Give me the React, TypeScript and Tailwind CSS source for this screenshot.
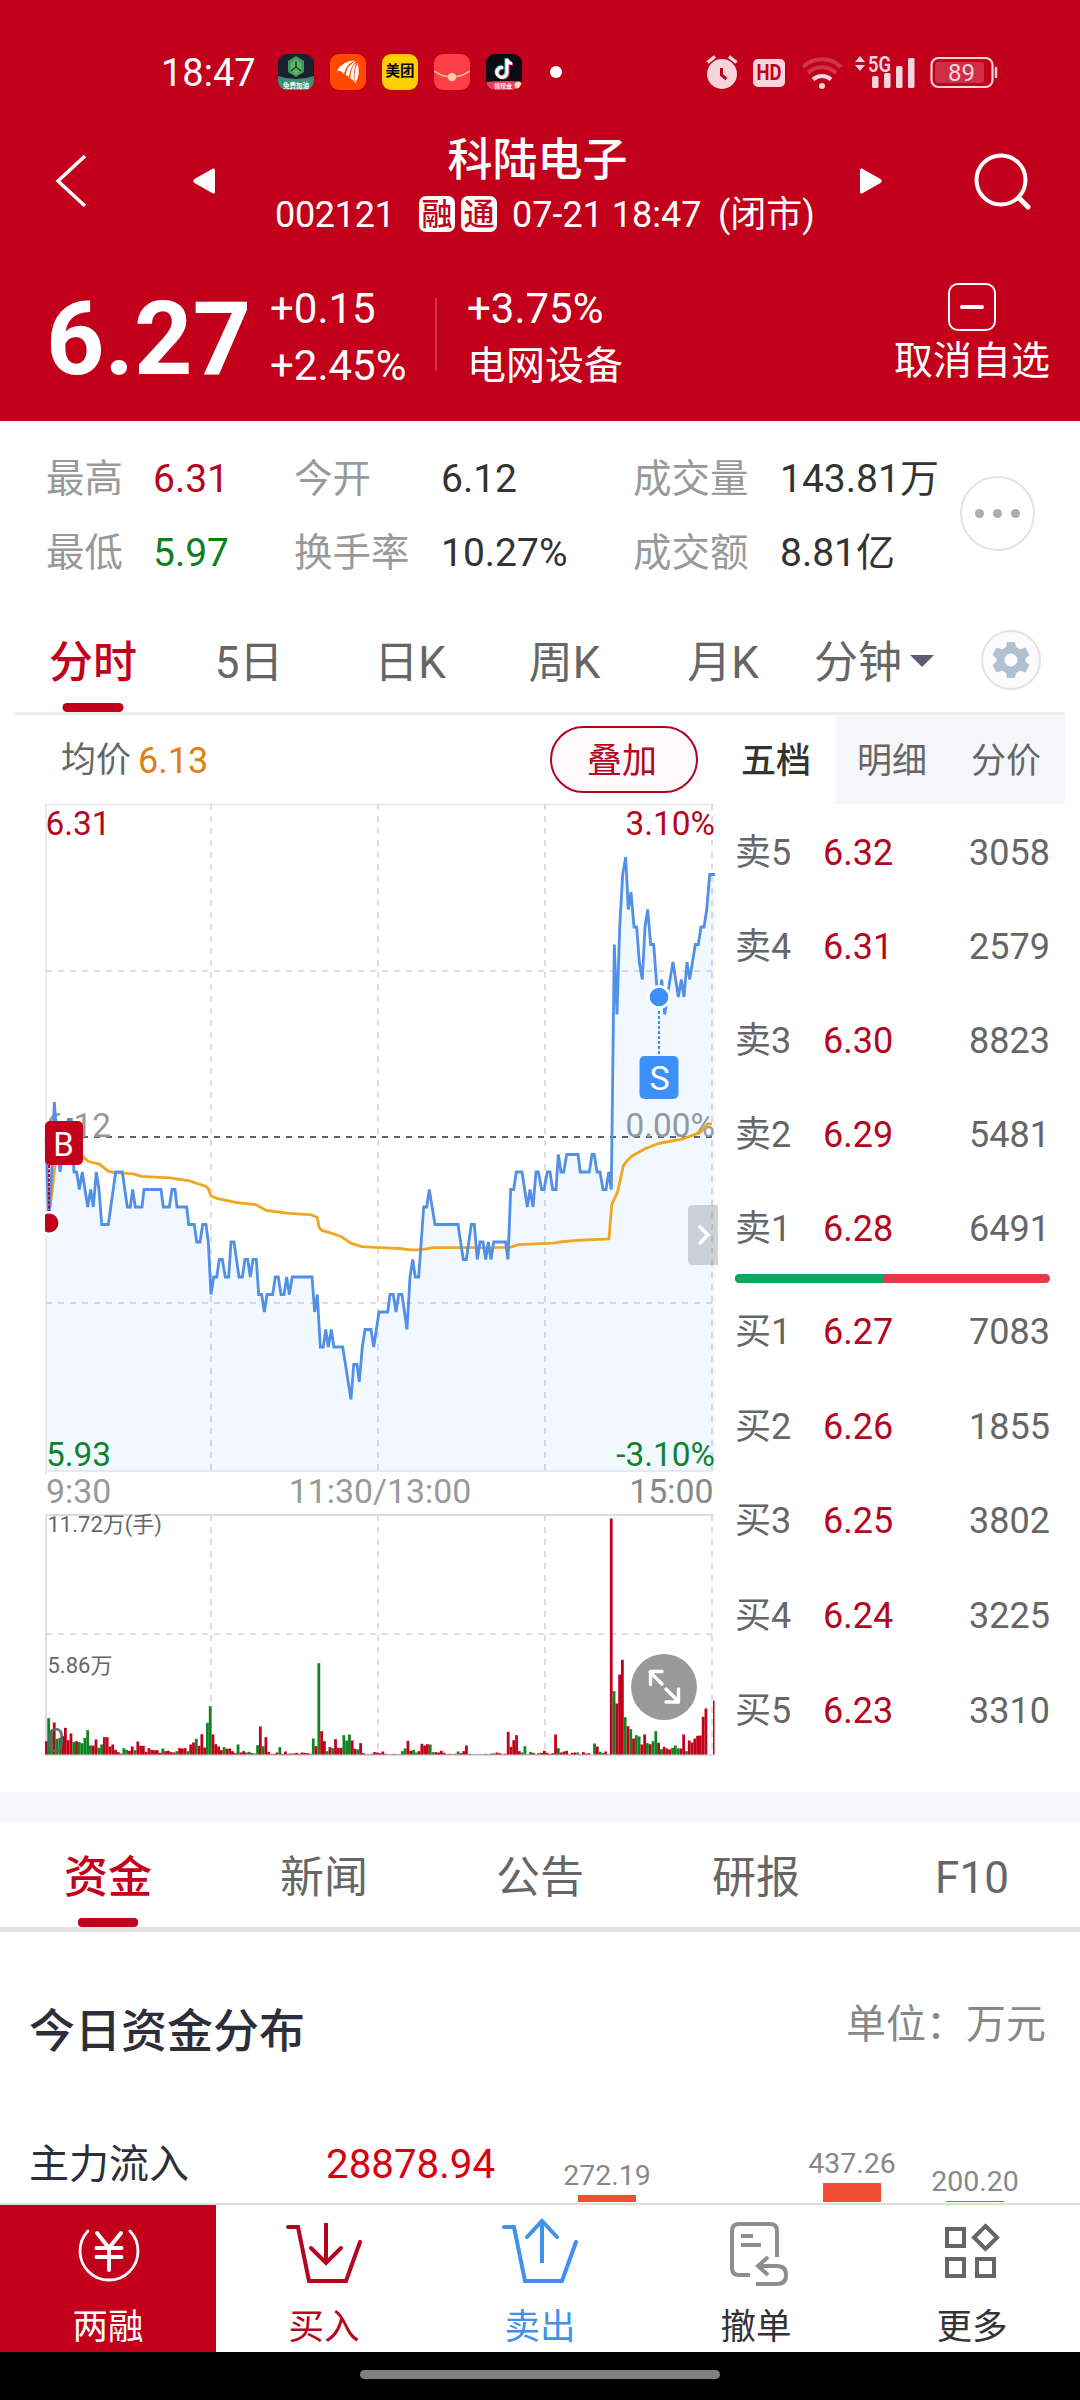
import { useState } from "react";
import clsx from "clsx";

const FONT = "font-['Roboto','Noto_Sans_CJK_SC',sans-serif]";

// Price line: [x in thirds of a pixel, distance from the previous close in cents]
const PRICE: [number, number][] = [
  [48, 0], [56, -5], [65, -2], [73, 2], [81, 0], [90, -2], [98, -1], [107, 0], [115, 1], [124, 1],
  [132, -2], [140, -2], [148, -3], [157, -2], [165, -3], [173, -4], [182, -3], [190, -4], [199, -2],
  [207, -3], [215, -5], [235, -5], [257, -2], [277, -2], [292, -4], [301, -4], [308, -3], [316, -4],
  [336, -4], [342, -3], [393, -3], [400, -4], [418, -4], [426, -3], [435, -3], [441, -4], [470, -4],
  [476, -5], [493, -5], [500, -6], [510, -6], [518, -5], [528, -5], [535, -6], [543, -9], [551, -8],
  [560, -8], [568, -7], [577, -7], [586, -8], [596, -8], [603, -6], [612, -6], [627, -8], [637, -8],
  [645, -7], [653, -7], [661, -8], [669, -7], [679, -7], [686, -9], [695, -9], [703, -10], [711, -9],
  [728, -9], [736, -8], [745, -8], [753, -9], [762, -9], [770, -8], [778, -9], [787, -8], [846, -8],
  [854, -10], [862, -9], [871, -12], [880, -12], [887, -11], [895, -12], [904, -11], [912, -12],
  [938, -12], [963, -15], [971, -13], [981, -13], [988, -14], [997, -12], [1005, -11], [1023, -11],
  [1031, -12], [1047, -10], [1073, -10], [1080, -9], [1090, -9], [1098, -10], [1106, -9], [1116, -9],
  [1131, -11], [1140, -8], [1148, -7], [1156, -8], [1166, -8], [1181, -4], [1190, -4], [1198, -3],
  [1215, -5], [1284, -5], [1300, -7], [1309, -7], [1324, -5], [1333, -5], [1342, -7], [1350, -6],
  [1359, -6], [1367, -7], [1375, -6], [1383, -7], [1391, -6], [1427, -6], [1434, -7], [1442, -3],
  [1451, -3], [1459, -2], [1476, -2], [1492, -4], [1500, -3], [1509, -4], [1518, -2], [1525, -2],
  [1535, -3], [1542, -3], [1552, -2], [1560, -2], [1568, -3], [1578, -3], [1585, -1], [1593, -2],
  [1601, -2], [1610, -1], [1644, -1], [1651, -2], [1678, -2], [1686, -1], [1693, -1], [1701, -2],
  [1710, -2], [1719, -3], [1728, -3], [1736, -2], [1744, -3], [1753, 11], [1761, 7], [1769, 12],
  [1778, 15], [1787, 16], [1795, 13], [1803, 14], [1812, 12], [1820, 12], [1828, 10], [1837, 9],
  [1845, 12], [1853, 13], [1862, 11], [1871, 11], [1880, 8.7], [1887, 8], [1895, 9], [1904, 7],
  [1912, 8], [1920, 9], [1929, 10], [1945, 8], [1954, 9], [1962, 8], [1971, 10], [1979, 9],
  [1996, 11], [2005, 11], [2013, 12], [2022, 12], [2030, 13], [2039, 15], [2055, 15],
];

const AVERAGE: [number, number][] = [
  [52, -4.6], [60, -4], [68, -2.8], [75, -1.6], [90, -0.8], [140, -0.7], [159, -1.1], [175, -1.4],
  [208, -1.55], [235, -1.95], [250, -2.02], [310, -2.1], [335, -2.25], [420, -2.33], [478, -2.5],
  [500, -2.65], [525, -2.8], [533, -2.9], [543, -3.37], [560, -3.5], [610, -3.7], [630, -3.77],
  [678, -3.87], [710, -4.2], [770, -4.35], [845, -4.45], [862, -4.6], [867, -5.15], [875, -5.33],
  [905, -5.5], [935, -5.7], [962, -6.07], [995, -6.27], [1080, -6.35], [1110, -6.37], [1140, -6.45],
  [1170, -6.45], [1210, -6.32], [1440, -6.3], [1465, -6.15], [1570, -6.07], [1590, -6],
  [1640, -5.9], [1737, -5.82], [1745, -3.87], [1763, -3.12], [1780, -1.64], [1790, -1.39],
  [1805, -1.1], [1845, -0.67], [1885, -0.37], [1960, -0.1], [2010, 0.25], [2033, 0.75], [2046, 0.75],
];

// One entry per minute: height in thirds of a pixel, r = up, g = down
const VOLUME = (
  "40r 109g 72g 96r 47g 50g 55r 80r 43r 63r 38g 40r 37g 34g 50g 73g 27g 27r 45r 20g " +
  "30g 52r 52r 24r 30r 14r 7r 3r 19g 14g 11r 24r 13g 39r 26r 26r 8r 19r 14r 13r " +
  "13r 5r 18g 10r 11r 7r 6r 10g 19r 18r 19r 10g 30r 36r 47g 26r 61r 21r 95g 145g " +
  "60r 31r 24r 13r 22g 17r 18r 10r 4r 30g 6r 10r 6g 8g 4r 3g 28g 84r 25g 52r " +
  "8r 2r 2r 6r 22g 2r 9r 2r 3r 3r 5r 2r 6r 5r 4r 2r 48g 25r 274g 70r " +
  "40r 10g 22r 19g 46r 20r 20r 58g 42g 60g 42r 17r 15g 34r 4r 1r 1g 2r 7r 6r " +
  "4r 9r 2r 1g 1r 2g 1r 1r 10g 18g 41r 11r 14g 6g 10r 32r 27r 31r 30g 7g " +
  "7r 6r 11r 5r 1g 2r 1r 2r 9g 4r 10r 27r 2r 1g 1g 1r 1r 1g 2r 1r " +
  "3g 3r 6r 4r 1r 2r 68r 23r 43r 58r 10r 6g 25g 1g 8g 5r 1r 4g 5r 11r " +
  "5r 2r 4r 60r 19g 6r 9r 11r 1r 5r 6r 6g 1r 7r 3r 4r 0r 33g 24r 8g " +
  "5g 9r 1r 708r 190g 153r 240r 284r 112g 85r 76g 48r 58g 54g 30r 60r 34g 31r 40g 70g " +
  "35r 16g 23r 18r 15r 20g 27g 18g 18r 60r 10g 42r 36r 48r 56r 57r 113r 138r 0r 0r 162r"
).split(" ");

const toX = (x: number) => x / 3 - 15;
const toY = (cents: number) => 337 - cents * 17.5;
const toPoints = (list: [number, number][]) =>
  list.map(([x, c]) => `${toX(x).toFixed(1)},${toY(c).toFixed(1)}`).join(" ");

const STATS = [
  [
    { label: "最高", value: "6.31", color: "text-[#b3061f]" },
    { label: "最低", value: "5.97", color: "text-[#0f7f1e]" },
  ],
  [
    { label: "今开", value: "6.12", color: "text-[#333333]" },
    { label: "换手率", value: "10.27%", color: "text-[#333333]" },
  ],
  [
    { label: "成交量", value: "143.81万", color: "text-[#333333]" },
    { label: "成交额", value: "8.81亿", color: "text-[#333333]" },
  ],
];

const SELL = [
  ["卖5", "6.32", "3058"],
  ["卖4", "6.31", "2579"],
  ["卖3", "6.30", "8823"],
  ["卖2", "6.29", "5481"],
  ["卖1", "6.28", "6491"],
];

const BUY = [
  ["买1", "6.27", "7083"],
  ["买2", "6.26", "1855"],
  ["买3", "6.25", "3802"],
  ["买4", "6.24", "3225"],
  ["买5", "6.23", "3310"],
];

function StatusBar() {
  return (
    <div className="flex h-[144px] items-center pl-[161px] pr-[82px]">
      <span className="w-[117px] pt-0.5 text-[38px] leading-none">18:47</span>
      <div className="flex gap-4">
        <svg className="h-9 w-9" viewBox="0 0 36 36">
          <defs>
            <clipPath id="tile">
              <rect width="36" height="36" rx="9" />
            </clipPath>
          </defs>
          <g clipPath="url(#tile)">
            <rect width="36" height="36" fill="#1b1f30" />
            <path d="M18 2 26 7v11l-8 5-8-5V7z" fill="#3f9a63" />
            <path d="M18 5 23 9v8l-5 4-5-4V9z" fill="#62b862" />
            <path d="M18 7v6l-5 4M18 13l5 4" stroke="#123c30" strokeWidth="1.5" fill="none" />
            <path d="M0 22q18 6 36 0v14H0z" fill="#3f8f6f" />
            <text x="18" y="33.5" textAnchor="middle" fontSize="6.5" fontWeight="700" fill="#fff">免费加油</text>
          </g>
        </svg>
        <svg className="h-9 w-9" viewBox="0 0 36 36">
          <rect width="36" height="36" rx="9" fill="#ff4a00" />
          <g fill="#fff">
            <path d="M7 17Q12 7 25 6.500 16 10 14 20q-3-4-7-3z" />
            <path d="M15.5 21Q17 11 26 7q-6 7-7 16-1.500-2-3.500-2z" />
            <path d="M20.500 25Q20 14 26.500 8.500 23 17 24 28q-1-3-3.500-3z" />
            <path d="M25 30q-2-11 2.500-21 3.500 11-2.500 21z" />
          </g>
        </svg>
        <div className="flex h-9 w-9 items-center justify-center rounded-[9px] bg-[#ffd000] text-[14.5px] font-bold leading-none text-black">
          美团
        </div>
        <svg className="h-9 w-9" viewBox="0 0 36 36">
          <rect width="36" height="36" rx="9" fill="#fb3f46" />
          <path d="M0 17q18 12 36 0" stroke="#ffb49a" strokeWidth="1.6" fill="none" />
          <circle cx="18" cy="23" r="4.2" fill="#f7cfa0" />
        </svg>
        <svg className="h-9 w-9" viewBox="0 0 36 36">
          <g clipPath="url(#tile)" fill="none" strokeWidth="3">
            <rect width="36" height="36" fill="#0b0b16" />
            <path d="M17 13.5a5 5 0 1 0 4 5V5q1 4 5 4.5" stroke="#25e5e0" transform="translate(-1 -.7)" />
            <path d="M17 13.5a5 5 0 1 0 4 5V5q1 4 5 4.5" stroke="#f8365b" transform="translate(1 .7)" />
            <path d="M17 13.5a5 5 0 1 0 4 5V5q1 4 5 4.5" stroke="#fff" />
            <path d="M0 28q18-2 36 0v9H0z" fill="#ee3f5c" />
            <circle cx="32" cy="31" r="3.5" fill="#ffd9b0" />
            <text x="17" y="34" textAnchor="middle" fontSize="6" fontWeight="700" fill="#ffe6e6">领现金</text>
          </g>
        </svg>
      </div>
      <span className="ml-7 h-3 w-3 rounded-full bg-white" />

      <div className="ml-auto flex items-center text-[#f8d5dc]">
        <svg className="h-9 w-8" viewBox="0 0 32 36" fill="none">
          <circle cx="16" cy="20" r="15" fill="currentColor" />
          <path d="M1.5 8.5 9 2.5M30.5 8.5 23 2.5" stroke="currentColor" strokeWidth="3.5" />
          <path d="M15.5 14v7l5 4" stroke="#c3001b" strokeWidth="3" />
        </svg>
        <div className="ml-[15px] mt-0.5 flex h-7 w-8 items-center justify-center rounded-[5px] bg-[#f8d5dc] text-[22px] font-bold leading-none text-[#c3001b]">
          <span className="scale-x-[0.84]">HD</span>
        </div>
        <svg className="ml-4 h-9 w-[42px]" viewBox="0 0 42 36" fill="none" stroke="currentColor" strokeWidth="4">
          <path d="M2 13a27 27 0 0 1 38 0" opacity=".25" />
          <path d="M7 19a20 20 0 0 1 28 0" opacity=".25" />
          <path d="M12 25.5a13 13 0 0 1 18 0" />
          <circle cx="21" cy="32" r="3" fill="currentColor" stroke="none" />
        </svg>
        <svg className="ml-3 h-9 w-[61px] overflow-visible" viewBox="0 0 61 36" fill="currentColor">
          <path d="M5 2 10 8H0zM5 17 0 11h10z" />
          <text x="13" y="17.5" fontSize="22" fontWeight="600" textLength="23" lengthAdjust="spacingAndGlyphs">5G</text>
          <rect x="17" y="22" width="6.5" height="12" rx="1.5" />
          <rect x="29" y="19" width="6.5" height="15" rx="1.5" />
          <rect x="41" y="12" width="6.5" height="22" rx="1.5" />
          <rect x="53" y="4" width="6.5" height="30" rx="1.5" />
        </svg>
        <svg className="ml-[14px] h-9 w-[68px]" viewBox="0 0 68 36" fill="none">
          <rect x="1.5" y="4" width="61" height="29" rx="7" stroke="currentColor" strokeWidth="2.2" />
          <rect x="5" y="8" width="49" height="21" rx="3" fill="currentColor" opacity=".22" />
          <path d="M66 14v9" stroke="currentColor" strokeWidth="2.5" strokeLinecap="round" />
          <text x="31.5" y="27" textAnchor="middle" fontSize="24" fill="currentColor">89</text>
        </svg>
      </div>
    </div>
  );
}

function Header() {
  return (
    <header className="h-[421px] bg-[#c3001b] text-white">
      <StatusBar />

      <div className="flex h-[104px] pt-2">
        <svg className="ml-[54px] mt-0.5 h-[54px] w-[34px]" viewBox="0 0 34 54" fill="none" stroke="currentColor" strokeWidth="3.5">
          <path d="M31 2 4 27 31 52" />
        </svg>
        <svg className="ml-[105px] mt-4 h-[26px] w-[22px]" viewBox="0 0 22 26" fill="currentColor">
          <path d="M20 .5Q22 0 22 2v22q0 2-2 1.5L1.5 15Q-1 13 1.5 11z" />
        </svg>
        <div className="flex w-[645px] flex-col">
          <h1 className="-mt-3.5 h-[46px] text-center text-[45px] font-medium leading-[46px]">科陆电子</h1>
          <div className="mt-3 flex h-9 items-center whitespace-nowrap pl-[60px] text-[36px] leading-9">
            <span className="w-[144px] pt-px tracking-[-0.3px]">002121</span>
            <span className="mr-1.5 flex h-9 w-9 items-center justify-center rounded-[7px] bg-white text-[31px] font-medium leading-none text-[#c3001b]">融</span>
            <span className="mr-[15px] flex h-9 w-9 items-center justify-center rounded-[7px] bg-white text-[31px] font-medium leading-none text-[#c3001b]">通</span>
            <span className="w-[206px] pt-px">07-21 18:47</span>
            <span className="pt-px">(闭市)</span>
          </div>
        </div>
        <svg className="mt-4 h-[26px] w-[22px]" viewBox="0 0 22 26" fill="currentColor">
          <path d="M2 .5Q0 0 0 2v22q0 2 2 1.5L20.5 15Q23 13 20.5 11z" />
        </svg>
        <svg className="ml-[91px] h-[60px] w-[60px]" viewBox="0 0 60 60" fill="none" stroke="currentColor" strokeWidth="4">
          <circle cx="28" cy="28" r="24.5" />
          <path d="m46 46 9 9" strokeWidth="5" strokeLinecap="round" />
        </svg>
      </div>

      <div className="flex h-[173px] pl-[46px]">
        <div className="w-[224px] pt-10 text-[102px] font-bold leading-[103px]">6.27</div>
        <div className="w-[165px] pt-8 text-[42px] leading-[57px]">
          <div>+0.15</div>
          <div>+2.45%</div>
        </div>
        <div className="mt-[50px] h-[73px] w-0.5 bg-white/20" />
        <div className="ml-[30px] pt-8 text-[42px] leading-[57px]">
          <div>+3.75%</div>
          <div className="pt-px text-[39px]">电网设备</div>
        </div>
        <div className="ml-auto flex flex-col items-center pr-[30px] pt-[35px]">
          <div className="flex h-12 w-12 items-center justify-center rounded-[10px] border-[2.5px] border-white">
            <div className="h-1 w-6 rounded-full bg-white" />
          </div>
          <div className="mt-2.5 text-[39px] leading-[40px]">取消自选</div>
        </div>
      </div>
    </header>
  );
}

function Stats() {
  const columns = ["w-[248px]", "w-[339px]", "w-[327px]"];
  const labels = ["w-[107px]", "w-[147px]", "w-[147px]"];
  return (
    <section className="flex h-[179px] items-start pl-[46px] pt-[21px]">
      {STATS.map((column, i) => (
        <div key={i} className={clsx("text-[39px] leading-[74px]", columns[i])}>
          {column.map((item) => (
            <div key={item.label} className="flex whitespace-nowrap">
              <span className={clsx("text-[38.5px] text-[#999999]", labels[i])}>{item.label}</span>
              <span className={item.color}>{item.value}</span>
            </div>
          ))}
        </div>
      ))}
      <div className="mt-[34px] flex h-[75px] w-[75px] items-center justify-center gap-[9px] rounded-full border-2 border-[#e3e3e3]">
        <span className="h-[9px] w-[9px] rounded-full bg-[#a9adb5]" />
        <span className="h-[9px] w-[9px] rounded-full bg-[#a9adb5]" />
        <span className="h-[9px] w-[9px] rounded-full bg-[#a9adb5]" />
      </div>
    </section>
  );
}

function PeriodTabs() {
  const [active, setActive] = useState("分时");
  const tabs = [
    ["分时", "w-[156px]"],
    ["5日", "w-[156px]"],
    ["日K", "w-[166px]"],
    ["周K", "w-[143px]"],
    ["月K", "w-[174px]"],
  ];
  return (
    <nav className="mx-[15px] flex h-[115px] items-center border-b-[3px] border-[#ececee] text-[44px] leading-[60px] text-[#666666]">
      {tabs.map(([name, width]) => (
        <button
          key={name}
          onClick={() => setActive(name)}
          className={clsx(
            "relative h-full pt-3.5",
            width,
            active === name && "font-medium text-[#c3001b]",
          )}
        >
          {name}
          {active === name && (
            <span className="absolute bottom-0 left-1/2 h-[9px] w-[61px] -translate-x-1/2 rounded-full bg-[#c3001b]" />
          )}
        </button>
      ))}
      <button className="ml-1 flex items-center pt-3.5">
        分钟
        <svg className="ml-2 h-3 w-6 -translate-y-0.5" viewBox="0 0 24 12" fill="#5b5b72">
          <path d="M0 0h24L12 12z" />
        </svg>
      </button>
      <div className="ml-auto mr-6 mt-2 flex h-[60px] w-[60px] items-center justify-center rounded-full border-2 border-[#e3e3e3] bg-[#fbfbfb]">
        <svg className="h-[38px] w-[38px]" viewBox="0 0 38 38" fill="#b1bfd0">
          <path
            fillRule="evenodd"
            d="M15 1h8l1 5 4 2.5 5.5-2L37.5 14l-4 3.5v3l4 3.5-4 7.5-5.5-2L24 32l-1 5h-8l-1-5-4-2.500-5.500 2L.5 24l4-3.500v-3L.5 14l4-7.500 5.500 2L14 6zM19 12.500a6.500 6.500 0 1 0 0 13 6.500 6.500 0 0 0 0-13z"
          />
        </svg>
      </div>
    </nav>
  );
}

function Chart() {
  const price = toPoints(PRICE);
  return (
    <svg className="block h-[990px] w-[720px]" viewBox="-45 0 720 990">
      {/* price grid */}
      <g fill="none" stroke="#dddddf" strokeWidth="2">
        <path d="M1 675V4.5H669" stroke="#ebebed" />
        <path d="M1 171H667M1 503H667" strokeDasharray="6 6" />
        <path d="M166 4V670M333 4V670M500 4V670M667 4V670" strokeDasharray="6 6" />
        <path d="M0 671H669" stroke="#e6eaef" />
      </g>
      <path d="M1 337H667" stroke="#606060" strokeWidth="2" strokeDasharray="6 6" />

      <g fontSize="33.4">
        <text x="0.5" y="35" fill="#b3061f">6.31</text>
        <text x="670" y="35" fill="#b3061f" textAnchor="end">3.10%</text>
        <text x="1" y="337" fill="#999999">6.12</text>
        <text x="670" y="337" fill="#999999" textAnchor="end">0.00%</text>
        <text x="1" y="666" fill="#0f7f1e">5.93</text>
        <text x="670" y="666" fill="#0f7f1e" textAnchor="end">-3.10%</text>
      </g>

      <polygon points={`1,670 ${price} 670,670`} fill="#379bff" opacity=".07" />
      <polyline points={toPoints(AVERAGE)} fill="none" stroke="#f2a51e" strokeWidth="2.8" strokeLinejoin="round" />
      <polyline points={price} fill="none" stroke="#528fe6" strokeWidth="2.8" />

      {/* trade marks */}
      <path d="M4 365V413" stroke="#c3001b" strokeWidth="2" strokeDasharray="3 1.5" />
      <path d="M0 411.700A12 12 0 1 1 0 434.300z" fill="#fff" />
      <path d="M0 414.500A9.400 9.400 0 1 1 0 431.500z" fill="#c3001b" />
      <rect x="0" y="321" width="38" height="44" rx="5" fill="#c3001b" />
      <text x="18.5" y="355.5" fontSize="33" fill="#fff" textAnchor="middle">B</text>

      <path d="M614 206V257" stroke="#3f8ef5" strokeWidth="2" strokeDasharray="3 2" />
      <circle cx="614" cy="197" r="12" fill="#fff" />
      <circle cx="614" cy="197" r="9.3" fill="#3d90f8" />
      <rect x="594.5" y="256" width="39" height="43" rx="5" fill="#3d90f8" />
      <text x="614.5" y="290" fontSize="34" fill="#fff" textAnchor="middle">S</text>

      <path d="M673 405H648q-5 0-5 5v50q0 5 5 5h25z" fill="#8c8c98" opacity=".38" />
      <path d="m655 427 8 8-8 8" fill="none" stroke="#fff" strokeWidth="3.6" strokeLinecap="round" />

      <g fontSize="33.8" fill="#999999">
        <text x="1" y="703">9:30</text>
        <text x="335" y="703" textAnchor="middle">11:30/13:00</text>
        <text x="668.5" y="703" textAnchor="end" fill="#888888">15:00</text>
      </g>

      {/* volume */}
      <g fill="none" stroke="#dddddd" strokeWidth="2">
        <path d="M1 955V715H669" />
        <path d="M1 834H667" strokeDasharray="6 6" />
        <path d="M166 715V955M333 715V955M500 715V955M667 715V955" strokeDasharray="6 6" />
        <path d="M0 955H669" />
      </g>
      {VOLUME.map((item, i) => {
        const height = parseInt(item) / 3;
        const x = i === 240 ? 668 : Math.max(i * 2.785 - 0.5, 0);
        return (
          <rect
            key={i}
            x={x}
            y={954.5 - height}
            width={i === 240 ? 1.5 : 2.785}
            height={height}
            fill={item.endsWith("r") ? "#c3001b" : "#0f8420"}
          />
        );
      })}
      <g fill="#666666">
        <text x="2.5" y="732" fontSize="22">11.72万(手)</text>
        <text x="2.5" y="873" fontSize="22">5.86万</text>
        <text x="1.5" y="952" fontSize="33" opacity=".9">0</text>
      </g>
      <circle cx="619" cy="887" r="33" fill="#999999" />
      <path
        d="M617 884 605 872M617 871.5h-11.5v13M621 889l12 12M621 902h12.5v-13"
        fill="none"
        stroke="#fff"
        strokeWidth="3.4"
        strokeLinecap="round"
        strokeLinejoin="round"
      />
    </svg>
  );
}

function BookRow({ row, height }: { row: string[]; height: string }) {
  const [name, price, amount] = row;
  return (
    <div className={clsx("flex items-center pt-1 text-[36px] leading-none text-[#666666]", height)}>
      <span className="w-[88px]">{name}</span>
      <span className="text-[#b3061f]">{price}</span>
      <span className="ml-auto">{amount}</span>
    </div>
  );
}

function OrderBook() {
  return (
    <aside className="w-[345px]">
      <div className="flex h-[89px] text-[35px] leading-[93px] text-[#666666]">
        <span className="w-[115px] pl-[21px] font-medium text-[#333333]">五档</span>
        <div className="flex flex-1 justify-between bg-[#f5f5fa] pl-[22px] pr-6">
          <span>明细</span>
          <span>分价</span>
        </div>
      </div>
      <div className="px-[15px]">
        {SELL.map((row) => (
          <BookRow key={row[0]} row={row} height="h-[94px]" />
        ))}
        <div className="flex h-[9px] overflow-hidden rounded-full bg-[#e8384a]">
          <div className="w-[149px] bg-[#06ab61]" />
        </div>
        {BUY.map((row) => (
          <BookRow key={row[0]} row={row} height="h-[94.6px]" />
        ))}
      </div>
    </aside>
  );
}

function InfoTabs() {
  const [active, setActive] = useState("资金");
  return (
    <nav className="flex h-[110px] border-b-[5px] border-[#e2e2e2] text-[44px] leading-[106px] text-[#666666]">
      {["资金", "新闻", "公告", "研报", "F10"].map((name) => (
        <button
          key={name}
          onClick={() => setActive(name)}
          className={clsx("relative flex-1 pt-[3px]", active === name && "font-medium text-[#c3001b]")}
        >
          {name}
          {active === name && (
            <span className="absolute bottom-0 left-1/2 h-[9px] w-[60px] -translate-x-1/2 rounded-[4px] bg-[#c3001b]" />
          )}
        </button>
      ))}
    </nav>
  );
}

function FundBars() {
  return (
    <div className="flex h-[77px] flex-1 items-end text-[28.5px] leading-none text-[#888888]">
      <div className="ml-[62px] flex w-[90px] flex-col items-center gap-[5px]">
        272.19
        <div className="h-[7px] w-[58px] bg-[#f04d34]" />
      </div>
      <div className="ml-[155px] flex w-[90px] flex-col items-center gap-[5px]">
        437.26
        <div className="h-[19px] w-[58px] bg-[#f04d34]" />
      </div>
      <div className="ml-[33px] flex w-[90px] flex-col items-center gap-[5px]">
        200.20
        <div className="h-px w-[58px] bg-[#f04d34]" />
      </div>
    </div>
  );
}

function Funds() {
  return (
    <section className="h-[271px] overflow-hidden">
      <div className="flex items-center justify-between pl-[29px] pr-[34px] pt-[66px] text-[46px] leading-[66px] text-[#2e2e3a]">
        <h2 className="font-medium">今日资金分布</h2>
        <span className="-mt-3 text-[40px] text-[#888888]">单位：万元</span>
      </div>
      <div className="mt-[61px] flex h-[80px] pl-[29px]">
        <span className="w-[297px] text-[40px] leading-[80px] text-[#2e2e3a]">主力流入</span>
        <span className="w-[174px] text-[40.3px] leading-[80px] text-[#d9000f]">28878.94</span>
        <FundBars />
      </div>
    </section>
  );
}

function BottomBar() {
  const label = "mt-3.5 text-[35.5px] leading-[40px]";
  return (
    <footer>
      <div className="grid h-[149px] grid-cols-5 border-t-2 border-[#dddddd] text-[#333333]">
        <button className="flex flex-col items-center bg-[#c3001b] pt-3 text-white">
          <svg className="h-[76px] w-[80px]" viewBox="0 0 80 76" fill="none" stroke="currentColor" strokeLinecap="round">
            <path d="M62 14a29 29 0 1 1-42 0" strokeWidth="2.8" />
            <path d="m29 16 12 15 12-15M41 31v22M28.5 31h25M28.5 40h25" strokeWidth="4" />
          </svg>
          <span className={label}>两融</span>
        </button>
        <button className="flex flex-col items-center pt-3 text-[#b3061f]">
          <svg className="h-[76px] w-[80px]" viewBox="1 0 80 76" fill="none" stroke="currentColor" strokeWidth="4" strokeLinecap="round">
            <path d="M5 10h10l11 54h37L77 25" />
            <path d="M43 6v41" strokeLinecap="butt" />
            <path d="m28 31 15 15 15-15" />
          </svg>
          <span className={label}>买入</span>
        </button>
        <button className="flex flex-col items-center pt-3 text-[#4290ee]">
          <svg className="h-[76px] w-[80px]" viewBox="1 0 80 76" fill="none" stroke="currentColor" strokeWidth="4" strokeLinecap="round">
            <path d="M5 10h10l11 54h37L77 25" />
            <path d="M43 5v41" strokeLinecap="butt" />
            <path d="M28 20 43 4l15 16" />
          </svg>
          <span className={label}>卖出</span>
        </button>
        <button className="flex flex-col items-center pt-3">
          <svg className="h-[76px] w-[80px]" viewBox="0 0 80 76" fill="none" stroke="#8e8e8e" strokeWidth="4">
            <path d="M34 58H23q-7 0-7-7V14q0-7 7-7h31q7 0 7 7v26M25 19h12M25 28h20" />
            <path d="M52 40 42 49l10 9M42 49h19q9 0 9 9t-9 9H40" />
          </svg>
          <span className={label}>撤单</span>
        </button>
        <button className="flex flex-col items-center pt-3">
          <svg className="h-[76px] w-[80px]" viewBox="0 0 80 76" fill="none" stroke="#666666" strokeWidth="4">
            <path d="M15 12h17v17H15zM15 42h17v17H15zM45 42h17v17H45zM53.5 9 65 20.5 53.5 32 42 20.5z" />
          </svg>
          <span className={label}>更多</span>
        </button>
      </div>
      <div className="h-12 bg-black pt-[18px]">
        <div className="mx-auto h-[9px] w-[360px] rounded-full bg-[#808080]" />
      </div>
    </footer>
  );
}

export default function App() {
  return (
    <main className={clsx("h-[2400px] w-[1080px] overflow-hidden bg-white", FONT)}>
      <Header />
      <Stats />
      <PeriodTabs />
      <div className="flex h-[1077px]">
        <section className="w-[720px]">
          <div className="flex h-[85px] items-center pl-[61px] text-[36px] leading-none">
            <span className="pt-1.5 text-[35px] text-[#666666]">均价</span>
            <span className="ml-[7px] pt-1.5 text-[#e07f14]">6.13</span>
            <button className="ml-auto mr-[22px] mt-1 h-[67px] w-[148px] rounded-full border-2 border-[#b3061f] bg-[#fcfafa] pr-1 pt-1 text-[35px] text-[#b3061f]">
              叠加
            </button>
          </div>
          <Chart />
        </section>
        <OrderBook />
      </div>
      <div className="h-[30px] bg-[#f5f5fa]" />
      <InfoTabs />
      <Funds />
      <BottomBar />
    </main>
  );
}
